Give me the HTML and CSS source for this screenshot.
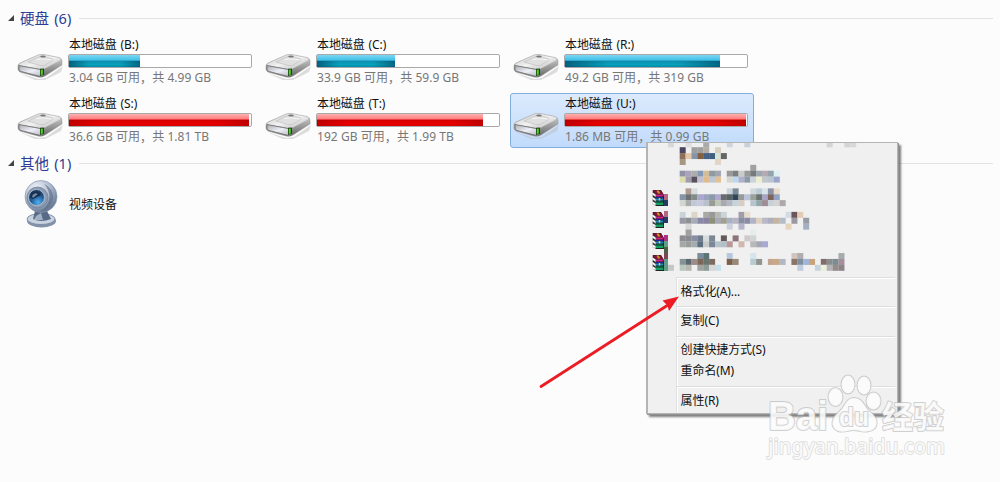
FILE: index.html
```html
<!DOCTYPE html>
<html lang="zh-CN">

<head>
  <meta charset="UTF-8">
  <title>计算机</title>
  <link rel="stylesheet" href="styles.css">
</head>

<body>

  <!-- shared icons -->
  <svg class="defs" width="0" height="0">
    <defs>
      <linearGradient id="gTop" x1="0" y1="0" x2="1" y2="1">
        <stop offset="0" stop-color="#c4c4c4"/>
        <stop offset="0.5" stop-color="#f2f2f2"/>
        <stop offset="1" stop-color="#b9b9b9"/>
      </linearGradient>
      <linearGradient id="gSide" x1="0" y1="0" x2="0" y2="1">
        <stop offset="0" stop-color="#dcdcdc"/>
        <stop offset="1" stop-color="#666"/>
      </linearGradient>
      <linearGradient id="gFront" x1="0" y1="0" x2="1" y2="1">
        <stop offset="0" stop-color="#aaaab0"/>
        <stop offset="0.5" stop-color="#eeeef8"/>
        <stop offset="1" stop-color="#b4b4bc"/>
      </linearGradient>
      <radialGradient id="gCam" cx="0.35" cy="0.25" r="0.8">
        <stop offset="0" stop-color="#f1f5fa"/>
        <stop offset="0.55" stop-color="#aebccf"/>
        <stop offset="1" stop-color="#5d708b"/>
      </radialGradient>
      <radialGradient id="gLens" cx="0.6" cy="0.8" r="0.8">
        <stop offset="0" stop-color="#4fb2ed"/>
        <stop offset="0.5" stop-color="#245f9f"/>
        <stop offset="1" stop-color="#142e50"/>
      </radialGradient>
    </defs>
    <symbol id="drive" viewBox="0 0 48 28">
      <path d="M3 20 L22 26 L30 25 L47 13 L45 19 L29 27 L19 27 Z" fill="#bbb" opacity="0.5"/>
      <path d="M2 13 Q2 11 4 10 L22 2 Q25 1 28 1.500 L43 4.500 Q46 5.500 46 8 L46 12 L29 23 Q26 25 22 24 L4 19 Q2 18 2 16 Z" fill="url(#gSide)" stroke="#999" stroke-width="0.500"/>
      <path d="M3 11 L22 2.400 Q25 1.500 28 2 L43 5 Q46 6 43 8 L29 15.500 Q27 16.500 24 16 L4 12.500 Z" fill="url(#gTop)"/>
      <path d="M12 9 L24 3.500 L36 5.500 Q38 6.500 36 8 L29 12 Q27 13 24 12.500 Z" fill="#e0e0e0" stroke="#bbb" stroke-width="0.600"/>
      <path d="M20 6.500 Q28 5 36 7" fill="none" stroke="#f6f6f6" stroke-width="1"/>
      <ellipse cx="27" cy="3.500" rx="2.800" ry="1.100" fill="#777"/>
      <path d="M3 12.500 L24 16.500 Q28 17 28 19 L27.500 22 Q26 24 22.500 23 L5 18.500 Q3 18 3 16 Z" fill="url(#gFront)" stroke="#777" stroke-width="0.900"/>
      <path d="M24 15.800 L28 15.500 L28 21.800 L24 23 Z" fill="#1c4412"/>
      <path d="M24.800 16.800 L26.800 16.500 L26.800 21.500 L24.800 22 Z" fill="#4fd428"/>
    </symbol>
    <symbol id="rar" viewBox="0 0 16 16" preserveAspectRatio="none">
      <path d="M1 0 H12 L16 5 V16 H5 L1 12 Z" fill="#222"/>
      <path d="M1 .5 H12 L15 4 H5 Z" fill="#8b1038"/>
      <path d="M5 4.500 H15 V6.500 H5 Z" fill="#d02088"/>
      <path d="M3 7 H15 V8 H6 Z" fill="#2424a0"/>
      <path d="M5 8.500 H15 V10.500 H5 Z" fill="#1689c8"/>
      <path d="M3 11 H14 L15 12 H5 Z" fill="#075a38"/>
      <path d="M5 12.500 H15 V15 H5 Z" fill="#10a060"/>
      <path d="M0 2 L5 4.500 V7 L0 4.500 Z M0 6.500 L5 9 V11.500 L0 9 Z M0 11 L5 13 V15.500 L0 13.500 Z" fill="#fff" stroke="#777" stroke-width="0.400"/>
      <path d="M6 .5 H9 L11 3.500 H8 Z" fill="#c59b28"/>
      <path d="M9 8 H11 V10.500 H9 Z" fill="#d6cf60"/>
    </symbol>
  </svg>

  <div class="explorer">
    <div class="group-header">
      <svg class="arrow" width="6" height="6"><path d="M6 0 V6 H0 Z" fill="#444"/></svg>
      <span class="group-title">硬盘 (6)</span>
      <span class="line"></span>
    </div>

    <div class="drives">
      <div class="drive">
        <svg class="drive-icon"><use href="#drive"/></svg>
        <div class="info">
          <div class="name">本地磁盘 (B:)</div>
          <div class="bar"><div class="fill" style="width: 39%"></div></div>
          <div class="space">3.04 GB 可用<span class="comma">，</span>共 4.99 GB</div>
        </div>
      </div>
      <div class="drive">
        <svg class="drive-icon"><use href="#drive"/></svg>
        <div class="info">
          <div class="name">本地磁盘 (C:)</div>
          <div class="bar"><div class="fill" style="width: 43%"></div></div>
          <div class="space">33.9 GB 可用<span class="comma">，</span>共 59.9 GB</div>
        </div>
      </div>
      <div class="drive">
        <svg class="drive-icon"><use href="#drive"/></svg>
        <div class="info">
          <div class="name">本地磁盘 (R:)</div>
          <div class="bar"><div class="fill" style="width: 85.300%"></div></div>
          <div class="space">49.2 GB 可用<span class="comma">，</span>共 319 GB</div>
        </div>
      </div>
      <div class="drive">
        <svg class="drive-icon"><use href="#drive"/></svg>
        <div class="info">
          <div class="name">本地磁盘 (S:)</div>
          <div class="bar"><div class="fill full" style="width: 98.900%"></div></div>
          <div class="space">36.6 GB 可用<span class="comma">，</span>共 1.81 TB</div>
        </div>
      </div>
      <div class="drive">
        <svg class="drive-icon"><use href="#drive"/></svg>
        <div class="info">
          <div class="name">本地磁盘 (T:)</div>
          <div class="bar"><div class="fill full" style="width: 91.200%"></div></div>
          <div class="space">192 GB 可用<span class="comma">，</span>共 1.99 TB</div>
        </div>
      </div>
      <div class="drive selected">
        <svg class="drive-icon"><use href="#drive"/></svg>
        <div class="info">
          <div class="name">本地磁盘 (U:)</div>
          <div class="bar"><div class="fill full" style="width: 99.500%"></div></div>
          <div class="space">1.86 MB 可用<span class="comma">，</span>共 0.99 GB</div>
        </div>
      </div>
    </div>

    <div class="group-header">
      <svg class="arrow" width="6" height="6"><path d="M6 0 V6 H0 Z" fill="#444"/></svg>
      <span class="group-title">其他 (1)</span>
      <span class="line"></span>
    </div>

    <div class="device">
      <svg class="camera" viewBox="0 0 34 50">
        <ellipse cx="17.500" cy="42" rx="14.500" ry="6.500" fill="#8292aa"/>
        <ellipse cx="17" cy="40" rx="14" ry="5.500" fill="#c9d3e0" stroke="#72839c" stroke-width="0.800"/>
        <path d="M11 32 H23 L27 40 Q17 44 9 40 Z" fill="#576a86"/>
        <path d="M12 37 L17 34 L19 41 L10 41 Z" fill="#a3b1c4"/>
        <circle cx="17" cy="17.500" r="16" fill="url(#gCam)" stroke="#8797ae" stroke-width="0.700"/>
        <path d="M20 5 A14 14 0 0 1 17 32 A17 17 0 0 0 20 5" fill="#566880" opacity="0.6"/>
        <circle cx="13.500" cy="18.500" r="10.500" fill="#8c9cb4" stroke="#6f8098" stroke-width="0.800"/>
        <circle cx="12.500" cy="18.500" r="8" fill="url(#gLens)" stroke="#b2c0d0" stroke-width="1"/>
        <path d="M6 18 Q8 12 14 13 Q17 14 17 16 L9 20 Z" fill="#172c48"/>
        <path d="M8 17 Q10 13 14 15 L9 19 Z" fill="#6f8aa8"/>
      </svg>
      <span class="device-name">视频设备</span>
    </div>
  </div>

  <div class="menu">
    <div class="hidden-items">
      <svg class="mosaic" id="mosaic" viewBox="0 0 252 132"></svg>
      <div class="rar-icons">
        <svg><use href="#rar"/></svg>
        <svg><use href="#rar"/></svg>
        <svg><use href="#rar"/></svg>
        <svg><use href="#rar"/></svg>
      </div>
    </div>
    <div class="section"><div class="item">格式化(A)...</div></div>
    <div class="section"><div class="item">复制(C)</div></div>
    <div class="section">
      <div class="item">创建快捷方式(S)</div>
      <div class="item">重命名(M)</div>
    </div>
    <div class="section last"><div class="item">属性(R)</div></div>
  </div>

  <svg class="pointer" viewBox="0 0 150 110">
    <path d="M11 106.500 L138 25" stroke="#ec1c24" stroke-width="2.800" stroke-linecap="round"/>
    <path d="M149 16.500 L139 31 L137.500 25.500 L132.500 20.500 Z" fill="#ec1c24"/>
  </svg>

  <svg class="watermark" viewBox="0 0 200 100">
    <g class="wm">
      <text class="wm-bai" x="18" y="60" textLength="60" lengthAdjust="spacingAndGlyphs">Bai</text>
      <ellipse cx="85.500" cy="27" rx="7" ry="9"/>
      <ellipse cx="98" cy="14.500" rx="6.500" ry="9"/>
      <ellipse cx="114" cy="15.500" rx="6.500" ry="9"/>
      <ellipse cx="123.500" cy="31" rx="7" ry="8.500"/>
      <path d="M104 28 C113 28 114 37 120 42 C130 49 128 60 119 61 C112 63 109 60 104 60 C98 60 95 63 88 61 C80 58 81 48 89 42 C96 36 96 28 104 28 Z"/>
      <text class="wm-du" x="89" y="56" textLength="30" lengthAdjust="spacingAndGlyphs">du</text>
      <text class="wm-cn" x="132" y="58" textLength="62">经验</text>
      <text class="wm-url" x="18" y="84" textLength="177" lengthAdjust="spacingAndGlyphs">jingyan.baidu.com</text>
    </g>
  </svg>

  <script>
    // row: [first column, colours...], '' leaves a cell empty
    var rows = {
      '-1': [-2, 'd8d8d8', '', '', 'ddd', '', '', 'aaa', '', '', '', 'd0d4dc', '', '', 'c8d0dc', '', '', '', '', '', '', '', '', '', '', '', '', '', 'd4d4d4', '', '', 'd4d4d4', 'd8d8d8'],
      '0': [0, '4a4660', '', '9f9f9f', '9f9f9f', 'b5aca4', '', 'd8d0bf'],
      '1': [0, '8f6e5c', 'e3c7a8', '8495aa', '83603f', '456286', '3f6080', 'd9e4d6', '666'],
      '2': [0, 'a69682', '', '', '', '', '', 'e2d5c6'],
      '3': [12, 'a0a0a0'],
      '4': [0, '8f93a5', 'aaa3bb', 'adadad', '8497b5', 'd3bc9a', '8f9aa0', 'a3a6b0', '', '999', '7a8080', 'c9ccc8', '999', '75797c', '9ca8b0', 'b5aab2', '94a3ac', 'dff0f2'],
      '5': [0, 'dcdcb0', 'a09cab', '5a505c', 'c2bfd0', 'e0bc8c', 'bcc7d5', 'e2c294', '', 'd8d4d0', 'bcd8f0', 'b0b0c8', '8c9ba8', 'c9d5da', 'eeeecc', 'c0c8cc', 'b8c4d0', '9aa6cc'],
      '7': [1, 'b09a94', 'd8dcdc', '', '', '', '', '', 'c8d4dc', '7a8a99', '', '', 'd0d8dc', 'bccbd6', 'd8e4e8', '8d94a8', 'e8dcc8'],
      '8': [0, '8694a8', '6c7070', '848c88', 'aaa6cc', '9aa3bb', '8b99a8', 'b0a8cc', '666d6c', '5a6468', '2f4858', '999', 'b8c4dc', '9aa09c', '6c7470', 'a8a4c8', '7c665c', '94a4c4'],
      '9': [0, 'd0d8d0', 'a8acac', 'c0c8d8', 'c8c8dc', 'b8c0cc', '999c94', 'bcc8b8', 'a8a8b0', 'b4b8c0', 'c4d4dc', 'd8ccc4', '', 'b8c4cc', '94a8ac', 'a08c94', 'c8d0d8', 'd4d4d4', 'aca8ac'],
      '11': [0, 'c8d4d8', '', 'ddd5c5', '', 'a8a8a4', '99999b', 'b8b8b4', 'c8d4d8', '', '', 'a09ca8', 'e8dccc', '', '', '', '', '', '', 'd4dae4', '6c545a', 'e4ccb4'],
      '12': [0, '9899a4', '8c9094', 'a8acb8', '8888a8', '8a84a0', '8c9078', 'a8a8b8', 'a4a090', 'a8b0c4', 'b8b4c4', '8890a0', '8c8ca8', 'b0b4c4', 'e0d0c0', 'b8b8c8', 'aeaebc', 'c4b4a0', 'b4bcc8', '', '9c98a0', '', '989ca4'],
      '13': [1, 'd8d8d8', '', '', '', '', '', '', 'ccd0dc', '', 'b4b4cc', '', '', '', '', '', '', '', 'e4d4bc', '', '', 'a4b0c0'],
      '14': [1, 'a0a0a0', '', '', '', '', '', '', '', '', '', '', 'e4ecec'],
      '15': [0, '8c8c94', '888c90', '888ca4', '707c8c', 'd4dcdc', '7c8898', '', '645858', '', '8c747c', '', 'd0c8cc', 'd0d4d4'],
      '16': [0, 'a4a8a4', '9c9c9c', 'a0acb0', '5c7080', 'c8ccc8', '7c8898', 'b8c4cc', 'b4c0c8', 'b89898', '', 'd0b8b0', '', 'b8b8b8', 'a4a8b4', 'a8a8d0'],
      '18': [3, '7c8c98', '5c7478', '', '', '', 'b8c8dc', '', '', '', 'd4e4ec', '', '', '', '', '', '', 'd0c4bc', 'b0acb0', '', '', '', '', '', '', 'a4acac'],
      '19': [0, '849494', '5c6870', '9c8c88', '7c6858', '68746c', '7c6c60', '', '', '7c604c', '988878', '', '', 'b8ccd0', '909490', '', 'c4a48c', 'c8a888', 'b0b8c4', '', '8c7468', '7c90a0', 'a4b4d8', 'c8a47c', '', '806c68', '888c8c', '7c8c90', 'a4909c'],
      '20': [-2, 'c4c8c4', '', 'b8c8c0', 'b8b8b0', '', 'a0a4a0', '8c9c98', 'd8d8d8', 'c8e0ec', '', '', '', '', '', '', '', '', '', '', '', '', '', 'c0ccdc', '', '', 'c8d4dc', 'ecf0dc', 'b4b4b8', '948c88', '8c8488']
    };
    var size = 5.88;
    var html = '';

    for (var r in rows) {
      var start = rows[r][0];
      for (var i = 1; i < rows[r].length; i++) {
        if (rows[r][i]) {
          var x = 31.7 + (start + i - 1) * size;
          var y = 4.2 + r * size;
          html += '<rect x="' + x + '" y="' + y + '" width="6" height="6" fill="#' + rows[r][i] + '"/>';
        }
      }
    }
    document.getElementById('mosaic').innerHTML = html +
      '<path d="M16 51h4v6h-4z M16 68h4v6h-4z" fill="#b06884"/>' +
      '<path d="M16 57h4v6h-4z M16 74h4v6h-4z" fill="#263c5c"/>' +
      '<path d="M16 92h4v6h-4z" fill="#b03084"/>' +
      '<path d="M16 98h4v6h-4z M16 116h4v12h-4z" fill="#609c88"/>' +
      '<path d="M16 104h4v6h-4z" fill="#4c6044"/><path d="M16 110h4v6h-4z" fill="#7c4854"/>';
  </script>

</body>

</html>
```
FILE: styles.css
```css
body {
  margin: 0;
  width: 1000px;
  height: 482px;
  overflow: hidden;
  position: relative;
  background-color: #fcfcfc;
  font-family: "Noto Sans", "Noto Sans CJK SC", sans-serif;
  font-size: 12px;
  color: #111;
}

.defs {
  position: absolute;
}

.explorer {
  padding: 7px 7px 0 8px;
}

.group-header {
  display: flex;
  align-items: center;
  height: 22px;
}

.group-title {
  width: 53px;
  margin: 0 6px 0 6px;
  font-size: 14.5px;
  word-spacing: 1.5px;
  line-height: 22px;
  color: #2c3c94;
  white-space: nowrap;
}

.line {
  flex: 1;
  height: 1px;
  background-color: #e2e2e4;
}

.drives {
  display: grid;
  grid-template-columns: repeat(3, 244px);
  grid-auto-rows: 55px;
  gap: 4.4px 4px;
  padding: 5px 0 4.1px 6px;
}

.drive {
  display: flex;
  box-sizing: border-box;
  border: 1px solid transparent;
  border-radius: 3px;
}

.selected {
  border-color: #84acdd;
  background: linear-gradient(#dceafc, #c1dbfc);
}

.drive-icon {
  width: 48px;
  height: 28px;
  margin: 18px 4px 0 1px;
}

.info {
  width: 184px;
}

.name {
  height: 19px;
  line-height: 19px;
  padding-left: 1px;
  letter-spacing: -0.1px;
  word-spacing: 1px;
  white-space: nowrap;
}

.bar {
  height: 14px;
  box-sizing: border-box;
  border: 1px solid #a9a9a9;
  border-radius: 2px;
  background-color: #fff;
}

.fill {
  height: 12px;
  background: linear-gradient(90deg, rgba(0, 50, 80, 0.55), transparent 28%, transparent 72%, rgba(0, 50, 80, 0.5)) 0 6px no-repeat,
    linear-gradient(#7ed6f2, #44c3e9 40%, #0f8fae 52%, #05a2bd 80%, #0689a8);
}

.full {
  background: linear-gradient(90deg, rgba(140, 0, 0, 0.4), transparent 18%, transparent 82%, rgba(140, 0, 0, 0.4)) 0 6px no-repeat,
    linear-gradient(#ffb0b0, #ff8080 40%, #d40000 52%, #e80000 80%, #d80000);
}

.space {
  line-height: 19px;
  padding-left: 1px;
  letter-spacing: 0.05px;
  color: #777;
  white-space: nowrap;
}

/* the TC face centres the comma in its box */
.comma {
  position: relative;
  top: 1px;
  font-family: "Noto Sans CJK TC", sans-serif;
  line-height: 1;
}

.device {
  display: flex;
  align-items: center;
  height: 50px;
  padding: 5px 0 0 16px;
}

.camera {
  width: 34px;
  height: 50px;
}

.device-name {
  margin-left: 11px;
  margin-bottom: 1px;
}

/* context menu */
.menu {
  position: absolute;
  left: 646px;
  top: 142px;
  width: 252px;
  height: 272px;
  box-sizing: border-box;
  border: 1px solid #b4b4b4;
  border-left-width: 2px;
  background-color: #f0f0f0;
  box-shadow: 1px 1px 0 #929292, 3px 3px 2px rgba(0, 0, 0, 0.5);
}

.hidden-items {
  display: grid;
  height: 134px;
}

.mosaic,
.rar-icons {
  grid-area: 1 / 1;
}

.mosaic {
  width: 252px;
  height: 132px;
}

.rar-icons {
  display: flex;
  flex-direction: column;
  gap: 5.5px;
  padding: 47px 0 0 4px;
}

.rar-icons svg {
  width: 12px;
  height: 16px;
}

.section {
  margin: 0 2px 0 28px;
  padding: 2.5px 0 4.5px 3.6px;
  border-top: 1px solid #dedede;
  border-left: 1px solid #e0e0e0;
  box-shadow: inset 1px 1px 0 #fff;
}

.section.last {
  padding-bottom: 1px;
}

.item {
  height: 21.300px;
  line-height: 22px;
  letter-spacing: -0.1px;
}

.pointer {
  position: absolute;
  left: 530px;
  top: 280px;
  width: 150px;
  height: 110px;
}

.watermark {
  position: absolute;
  left: 750px;
  top: 370px;
  width: 200px;
  height: 100px;
  overflow: visible;
}

.wm {
  fill: #fcfcfc;
  fill-opacity: 0.9;
  stroke: #b4b4b4;
  stroke-opacity: 0.6;
  stroke-width: 2px;
  stroke-linejoin: round;
  paint-order: stroke;
  font-family: "Liberation Sans", sans-serif;
  font-weight: bold;
}

.wm-bai {
  font-size: 40px;
}

.wm-du {
  font-size: 25px;
}

.wm-cn {
  font-family: "Noto Sans CJK SC", sans-serif;
  font-size: 31px;
}

.wm-url {
  font-family: "Noto Sans", sans-serif;
  font-weight: 500;
  font-size: 21px;
  stroke: #c4c4c4;
  stroke-width: 1.6px;
}
```
